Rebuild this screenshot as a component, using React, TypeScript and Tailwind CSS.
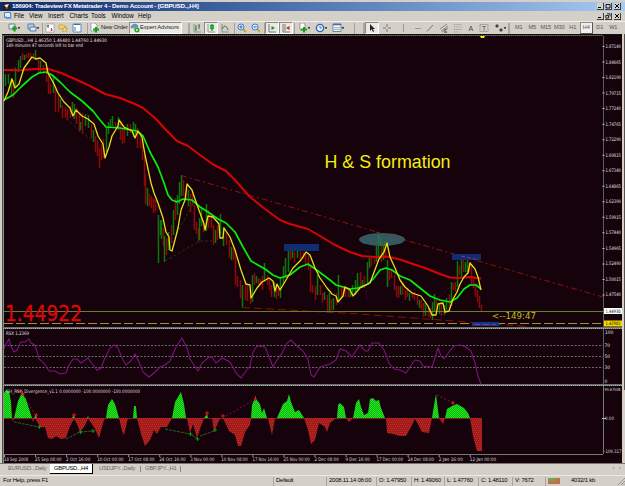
import type { ReactNode } from "react";

const menus = [
  { label: "File", cls: "w-[15px]" },
  { label: "View", cls: "w-[19px]" },
  { label: "Insert", cls: "w-[21.5px]" },
  { label: "Charts", cls: "w-[21.5px]" },
  { label: "Tools", cls: "w-[20.5px]" },
  { label: "Window", cls: "w-[26.5px]" },
  { label: "Help", cls: "w-[20px]" },
];

const periods = ["M1", "M5", "M15", "M30", "H1", "H4", "D1", "W1"];

const prices = [
  "1.87140", "1.84665", "1.82190", "1.79715", "1.77240", "1.74765", "1.72290", "1.69815", "1.67340",
  "1.64865", "1.62390", "1.59915", "1.57440", "1.54965", "1.52490", "1.50015", "1.47540",
];

const dates = [
  "18 Sep 2008", "25 Sep 08:00", "2 Oct 16:00", "10 Oct 00:00", "17 Oct 08:00", "24 Oct 16:00", "3 Nov 00:00",
  "10 Nov 08:00", "17 Nov 16:00", "25 Nov 00:00", "2 Dec 08:00", "9 Dec 16:00", "17 Dec 00:00", "24 Dec 08:00",
  "2 Jan 16:00", "12 Jan 00:00",
];

// x high low direction
const candles =
  "5 74 86 g,8 74 84 g,11 78 96 g,13 80 98 r,15 68 86 g,18 60 72 g,20 56 68 g,22 53 60 r,24 55 60 g,26 54 58 r,28 53 58 r,30 53 58 r,33 53 60 r,35 50 60 g,38 60 73 r,40 61 73 g,43 65 74 r,46 70 82 r,48 74 94 r,50 84 94 r,53 75 93 g,55 86 112 r,58 95 112 r,60 99 108 g,62 105 118 r,65 107 118 r,67 109 120 r,70 106 118 r,72 102 116 g,74 104 119 g,76 108 124 r,79 113 132 r,80 122 130 g,82 113 134 r,85 114 126 g,88 115 128 g,91 124 138 r,93 130 142 g,95 136 152 r,97 140 156 r,99 148 168 r,101 144 160 r,103 139 158 r,106 127 152 g,108 122 134 g,110 119 128 g,112 116 126 g,115 122 128 r,118 117 130 g,120 123 140 r,122 128 144 r,124 128 143 r,127 124 136 g,130 124 133 r,133 122 137 g,135 124 136 g,137 128 148 r,140 132 148 r,142 140 160 r,144 156 186 r,145 175 204 r,147 188 206 g,149 194 206 r,151 196 208 r,153 198 213 r,155 200 212 r,158 215 263 g,160 220 235 g,161 220 239 g,163 228 246 r,164 236 262 g,166 238 255 r,168 232 250 g,171 225 243 r,173 210 235 g,175 198 220 r,177 195 215 g,179 182 204 g,181 175 196 g,183 180 196 r,186 186 200 r,188 190 206 g,190 194 212 r,192 192 206 r,194 205 230 r,196 222 234 r,198 228 242 r,199 218 240 g,201 208 226 g,203 220 232 r,206 204 231 g,208 210 228 r,211 213 228 r,213 225 245 r,215 230 243 g,217 225 240 r,220 214 234 g,223 227 246 g,226 232 245 r,229 240 258 r,231 247 260 g,233 248 260 r,235 250 285 r,237 276 287 r,240 280 298 r,242 285 307 g,245 282 300 r,247 286 301 r,250 290 304 r,252 275 302 g,254 273 285 r,256 276 283 g,258 278 284 r,260 279 285 r,262 276 290 r,264 263 282 g,267 275 285 r,269 280 290 r,271 285 297 r,274 282 297 g,276 284 299 r,278 286 296 r,280 278 298 g,283 266 284 g,285 258 278 g,288 247 272 g,290 250 260 r,292 250 258 g,294 252 262 r,297 248 258 g,300 250 260 r,303 252 259 r,305 252 264 r,308 255 270 r,310 265 292 r,312 285 293 r,315 286 300 r,317 275 295 g,320 285 295 r,322 293 303 r,324 292 300 g,327 295 312 r,329 293 311 g,331 299 310 r,333 298 310 g,336 293 305 r,338 275 300 g,341 285 298 r,343 288 297 r,345 286 297 r,348 290 297 r,350 288 297 g,352 285 296 g,355 280 295 g,357 273 290 g,360 272 286 r,362 280 288 g,364 276 288 r,367 262 285 g,369 257 268 g,371 258 266 r,374 256 264 r,376 240 262 g,378 234 258 g,381 246 262 r,383 243 260 g,385 244 258 r,387 260 287 g,389 270 280 r,391 270 278 r,394 275 290 r,396 286 297 r,398 286 298 r,400 286 295 g,402 283 295 r,405 290 300 r,407 288 297 r,409 293 301 g,412 292 298 r,414 292 300 r,417 294 305 r,419 300 308 g,421 300 310 r,423 303 317 r,425 303 316 g,428 308 317 r,430 308 318 r,432 302 320 g,434 294 312 g,436 300 313 r,439 304 314 g,441 304 316 r,444 305 315 g,446 298 310 g,449 294 308 r,451 282 306 g,453 283 290 r,455 282 292 r,457 261 287 g,459 266 275 r,461 256 277 g,463 258 272 r,465 262 272 g,467 258 274 g,469 262 272 r,471 266 285 r,473 276 288 r,475 283 297 r,477 290 302 r,479 296 308 r,481 305 312 r";

const redMa =
  "4,70 20,70.3 35,69 48,69 60,72.5 75,79 90,86 105,94 120,98 135,104 143,108 155,118 167,131 177,141 188,146 200,155 214,165 226,171 235,180 250,197 265,209 280,220 290,224 308,229 320,236 335,245 350,252 362,256 375,257 387,256.5 400,259.5 410,263 425,268 440,274 450,277.5 460,278 470,277 481,278.5";
const greenMa =
  "4,100 13,95 22,86 32,77 39,73 46,72 52,75 60,82 70,92 82,101 93,111 100,120 106,127 120,128 137,131 143,136 150,152 158,167 164,183 168,195 172,200 177,202 183,199 192,200 200,207 208,212 218,219 226,223 235,232 243,247 251,261 265,269 273,275 280,278 290,275 300,267 308,264 318,271 330,280 336,285 350,289 358,288 368,284 374,278 380,270 386,268 392,270 400,276 410,280 420,288 430,296 440,300 450,302 457,298 464,289 470,285 476,285 481,289";
const yellowMa =
  "4,101 8,92 12,79 15,88 19,84 24,68 32,57 36,59 40,58 46,63 48,73 54,84 58,93 64,102 70,108 73,116 76,110 82,116 88,119 94,124 98,136 103,144 105,158 109,147 112,136 118,126 119,120 124,127 132,131 135,138 138,131 142,137 145,155 151,183 154,193 158,203 163,218 166,232 169,237 170,250 172,251 175,240 178,228 181,210 185,200 187,184 192,190 195,199 200,213 204,224 205,230 208,216 213,217 219,224 220,238 223,238 224,228 230,237 235,250 241,270 246,284 250,285 251,298 257,288 262,282 269,278 273,281 275,291 277,284 280,290 286,280 293,268 301,260 306,252 310,255 315,268 320,278 327,288 332,294 336,296 338,302 343,296 345,287 350,290 353,296 360,288 370,283 376,267 379,259 384,252 387,243 390,257 395,268 400,280 405,287 412,293 421,296 428,306 432,315 436,315 438,304 443,303 445,312 449,311 453,299 457,292 460,284 464,277 468,273 470,263 475,269 478,277 481,290";
const rsi =
  "4,349 6,344 9,339 11,346 14,352 17,350 21,342 25,342 29,339 31,343 35,345 39,359 44,363 49,371 55,371 60,374 66,373 69,365 73,359 77,359 81,363 88,358 93,365 97,370 101,368 105,358 110,348 114,345 118,348 123,360 126,365 131,361 135,354 139,362 143,372 149,377 154,373 160,367 165,365 170,361 176,347 182,338 187,348 190,359 198,371 202,363 208,358 212,357 216,363 222,358 230,362 236,373 241,378 246,371 250,366 253,352 257,346 265,347 268,354 273,367 277,360 282,353 287,343 291,340 297,346 303,351 308,359 311,375 314,377 320,367 330,364 336,360 340,349 346,351 352,357 355,352 360,345 365,351 368,351 372,343 379,343 384,350 389,363 394,369 400,370 406,373 412,364 415,360 420,361 423,366 432,367 435,358 438,348 441,356 444,359 449,352 454,346 460,345 466,347 471,351 475,363 478,376 481,384";

const bulls = [
  "4,418 4,393 6,390 9,391 11,402 12,418",
  "14,418 18,401 22,393 26,399 32,418",
  "34,418 36,414 37,418",
  "72,418 73.5,415 75,418",
  "87,418 88,416 89,418",
  "106,418 108,405 112,399 115,404 119,418",
  "133,418 134,406 136,406 137,418",
  "172,418 175,402 181,392 184,404 186,418",
  "204,418 207,414 208,418",
  "251,418 252,405 255,398 260,404 262,413 264,408 267,418",
  "277,418 283,404 287,401 289,394 291,402 295,412 299,410 304,418",
  "337,418 338,405 340,403 344,407 346,418",
  "353,418 356,403 359,399 361,407 364,415 368,413 370,399 373,398 376,401 379,400 381,408 385,418",
  "432,418 434,405 436,394 439,418",
  "445,418 447,409 452,406 457,404 464,408 468,413 470,418",
];
const bears = [
  "12,418 13,422 14,418",
  "32,418 33,422 35,418",
  "35,418 40,427 45,427 48,438 52,439 56,436 61,439 66,438 70,426 74,419 77,424 80,432 84,427 88,419 92,424 95,429 99,438 104,420 106,418",
  "119,418 122,431 124,435 128,418",
  "137,418 141,434 145,446 150,440 154,430 157,434 161,427 167,427 172,418",
  "187,418 190,433 193,424 197,438 201,426 204,418",
  "212,418 214,432 220,418",
  "223,418 229,431 235,435 238,446 241,446 245,432 250,425 251,418",
  "268,418 272,435 275,418",
  "304,418 308,430 311,444 315,440 319,423 325,427 327,432 330,423 336,418",
  "346,418 349,422 353,418",
  "386,418 387,433 393,434 400,436 406,436 411,427 415,419 418,424 422,432 429,433 432,418",
  "439,418 443,424 445,418",
  "470,418 473,436 477,451 482,451 482,418",
];

const Sep = () => <span className="h-[11px] w-px shrink-0 border-l border-[#a5a29b] bg-white" />;
const Grip = () => <span className="h-[11px] w-[2px] shrink-0 border-x border-[#aaa7a0] bg-white" />;

const Tool = ({ w, pressed, children }: { w: string; pressed?: boolean; children?: ReactNode }) => (
  <span
    className={`flex h-[12px] shrink-0 items-center justify-center ${w} ${
      pressed ? "border border-t-[#8d8a84] border-l-[#8d8a84] border-r-white border-b-white bg-[#ebe9e4]" : ""
    }`}
  >
    <svg width="12" height="10" viewBox="0 0 12 10" className="shrink-0" fill="none">
      {children}
    </svg>
  </span>
);

const Caret = () => <path d="M10 4.5h2l-1 1.2z" fill="#111" stroke="#111" strokeWidth=".5" />;

const WinButtons = ({ restore }: { restore?: boolean }) => (
  <div className="flex gap-px pr-1">
    {["min", "max", "close"].map((k) => (
      <span
        key={k}
        className="flex h-[7px] w-[7px] items-center justify-center border-r border-b border-[#404040] bg-[#d4d0c8] last:ml-px"
      >
        <svg width="6" height="6" viewBox="0 0 6 6" fill="none" stroke="#000" strokeWidth="1">
          {k === "min" && <path d="M1 4.5h3" />}
          {k === "max" && !restore && <path d="M1 1.5h4v3.5h-4z" strokeWidth=".9" />}
          {k === "max" && restore && <path d="M2 .8h3v2.7M.8 2.5h2.7v2.6H.8z" strokeWidth=".8" />}
          {k === "close" && <path d="M1 1l4 4M5 1L1 5" />}
        </svg>
      </span>
    ))}
  </div>
);

const Toolbar = () => (
  <div className="flex h-[13px] items-center overflow-hidden border-t border-[#f0eeea] pl-1 text-[5.8px] text-[#222]">
    <Tool w="w-[19px]">
      <path d="M1 1h6v5H1z" fill="#dfe8f0" stroke="#748696" />
      <path d="M4 5.5h5M6.5 3v5.5" stroke="#159b20" strokeWidth="2.2" />
      <Caret />
    </Tool>
    <Tool w="w-[19px]">
      <path d="M1 1h6v5H1z" fill="#bcd5ef" stroke="#557daa" />
      <path d="M3 4h6v4H3z" fill="#d8e8fa" stroke="#557daa" />
      <Caret />
    </Tool>
    <Sep />
    <Tool w="w-[13px]">
      <path d="M2 1h8v8H2z" fill="#fff" stroke="#9a9a9a" strokeWidth=".7" />
      <path d="M4 2v3M3 3.2l1-1.2 1 1.2" stroke="#16852a" />
      <path d="M7.5 8V5M6.5 6.7l1 1.2 1-1.2" stroke="#d34" />
    </Tool>
    <Tool w="w-[14px]">
      <path d="M2 2h4l1 1h2v3H2z" fill="#f5d36b" stroke="#b8912c" strokeWidth=".6" />
      <path d="M7.5 3.5l1 2h2l-1.5 1.3.5 2-2-1.2-1.8 1.2.5-2L5 5.5h1.8z" fill="#ffe873" stroke="#a28220" strokeWidth=".5" />
    </Tool>
    <Tool w="w-[14px]">
      <path d="M2 1h8v8H2z" fill="#fff" stroke="#5a86bd" />
      <path d="M3 1.5h6" stroke="#3a6eb4" />
      <path d="M4 4v4" stroke="#9bbbe2" strokeWidth="2" />
    </Tool>
    <span className="w-[3px]" />
    <Sep />
    <Tool w="w-[12px]">
      <path d="M3 0h4l2 2v6H3z" fill="#fff" stroke="#888" strokeWidth=".7" />
      <path d="M5 6.5h6M8 4v5.5" stroke="#19a122" strokeWidth="2.2" />
    </Tool>
    <span className="w-[29px] whitespace-nowrap pl-px tracking-[-0.15px]">New Order</span>
    <span className="flex h-[12px] w-[53px] items-center whitespace-nowrap border border-t-[#8d8a84] border-l-[#8d8a84] border-r-white border-b-white bg-[#ebe9e4] tracking-[-0.1px]">
      <svg width="10" height="10" viewBox="0 0 10 10">
        <path d="M1 5c0-5 7-5 7-1z" fill="#5f9bd8" stroke="#386da5" strokeWidth=".5" />
        <path d="M2 5h3v3z" fill="#efc84a" />
        <circle cx="7" cy="7" r="2.5" fill="#1ba52a" />
        <path d="M6.2 5.7l2 1.3-2 1.3z" fill="#fff" />
      </svg>
      Expert Advisors
    </span>
    <span className="w-[6px]" />
    <Grip />
    <Tool w="w-[14px]">
      <path d="M3 1v8h7" stroke="#777" strokeWidth=".7" />
      <path d="M5 2v6M4 6h1M8 1v5M8 3h1" stroke="#257a30" />
    </Tool>
    <Tool w="w-[14px]" pressed>
      <path d="M3 1v8h7" stroke="#777" strokeWidth=".7" />
      <path d="M7 1v7" stroke="#138a1b" />
      <path d="M5.5 2h3v4h-3z" fill="#21b52c" stroke="#138a1b" strokeWidth=".6" />
    </Tool>
    <Tool w="w-[14px]">
      <path d="M3 1v8h7" stroke="#777" strokeWidth=".7" />
      <path d="M3 6c2-4 4-4 6 1" stroke="#257a30" />
    </Tool>
    <span className="w-[2px]" />
    <Sep />
    {["in", "out"].map((z) => (
      <Tool key={z} w="w-[14px]">
        <path d="M7 6l3 3" stroke="#c9a227" strokeWidth="1.8" />
        <circle cx="5" cy="4" r="3" fill="#dcedff" stroke="#3f7fce" />
        <path d={z === "in" ? "M3.5 4h3M5 2.5v3" : "M3.5 4h3"} stroke="#2262b4" />
      </Tool>
    ))}
    <span className="w-px" />
    <Sep />
    <Tool w="w-[14px]" pressed>
      <path d="M3 1v8h7" stroke="#777" />
      <path d="M5.5 3l3.5 2-3.5 2z" fill="#17912b" />
    </Tool>
    <Tool w="w-[14px]" pressed>
      <path d="M3 1v8h7M5 1v7" stroke="#777" />
      <path d="M9.5 3L6 5l3.5 2z" fill="#c52727" />
    </Tool>
    <span className="w-px" />
    <Sep />
    <Tool w="w-[17px]">
      <path d="M2 0h4l1 2v5H2z" fill="#fff" stroke="#777" strokeWidth=".7" />
      <path d="M3 6.5h6M6 4v5.5" stroke="#19a122" strokeWidth="2" />
      <Caret />
    </Tool>
    <Tool w="w-[17px]">
      <circle cx="5" cy="5" r="3.6" fill="#e7f2ff" stroke="#2869bd" strokeWidth="1.4" />
      <path d="M5 2.8V5h1.8" stroke="#333" strokeWidth=".7" />
      <Caret />
    </Tool>
    <Tool w="w-[17px]">
      <path d="M1 1h8v7.5H1z" fill="#fff" stroke="#5b86b8" />
      <path d="M1 1.5h8" stroke="#3a6eb4" strokeWidth="1.5" />
      <path d="M2 5l2-1 2 1 2-1" stroke="#c55" strokeWidth=".7" />
      <path d="M2 7l2-1 2 1 2-1" stroke="#2a9b38" strokeWidth=".7" />
      <Caret />
    </Tool>
    <span className="w-[8px]" />
    <Sep />
    <span className="w-[8px]" />
    <Grip />
    <Tool w="w-[14px]" pressed>
      <path d="M4 1v7l1.7-1.7L7 9l1-.5-1-2.500h2z" fill="#222" />
    </Tool>
    <Tool w="w-[15px]">
      <path d="M6 1v3M6 6v3M2 5h3M7 5h3" stroke="#777" />
    </Tool>
    <Tool w="w-[16px]">
      <path d="M7.500 1v8" stroke="#999" />
    </Tool>
    <Tool w="w-[13px]">
      <path d="M4 5.500h6" stroke="#999" />
    </Tool>
    <Tool w="w-[14px]">
      <path d="M3 8.500L9 2" stroke="#777" />
    </Tool>
    <Tool w="w-[14px]">
      <path d="M2 6l7-5M3 8l7-5M4 9l6-4" stroke="#777" strokeWidth=".8" />
      <text x="6" y="10" fontSize="5" fill="#333">E</text>
    </Tool>
    <Tool w="w-[13px]">
      <path d="M2 1.500h8M2 4h8M2 6.500h8M2 9h5" stroke="#888" strokeWidth=".7" strokeDasharray="1 .6" />
    </Tool>
    <Tool w="w-[13px]">
      <text x="3.500" y="8" fontSize="7" fill="#444">A</text>
    </Tool>
    <Tool w="w-[14px]">
      <path d="M2 1.500h8v7H2z" stroke="#777" strokeWidth=".7" strokeDasharray="1 .6" />
      <text x="4" y="7.500" fontSize="6.500" fill="#444">T</text>
    </Tool>
    <Tool w="w-[17px]">
      <path d="M1 3l2-2 2 2-2 2zM5 7l2-2 2 2-2 2z" fill="#444" />
      <Caret />
    </Tool>
    <Grip />
    <div className="flex items-center pl-[2px] text-[5.6px] tracking-[-0.1px] text-[#555]">
      {periods.map((p) => (
        <span
          key={p}
          className={`flex h-[12px] w-[13.5px] items-center justify-center ${p === "H4" ? "border border-t-[#8d8a84] border-l-[#8d8a84] bg-[#f2f0ec]" : ""}`}
        >
          {p}
        </span>
      ))}
    </div>
  </div>
);

const PriceChart = () => (
  <svg width="622" height="293" viewBox="0 34 622 293" className="block shrink-0" fill="none">
    <path d="M2 34.5h620" stroke="#111" />
    <path d="M3 35.5h600" stroke="#9a9f98" strokeDasharray="1 1" />
    <path d="M3 35.5h600" stroke="#4f574f" strokeOpacity=".7" />
    {candles.split(",").map((c) => {
      const [x, hi, lo, dir] = c.split(" ");
      return <path key={c} d={`M${Number(x) + 0.5} ${hi}V${lo}`} stroke={dir === "g" ? "#087808" : "#8c0a0a"} strokeWidth="1.5" />;
    })}
    <path d="M157.5 205v42M193.5 212v14M388.5 270v16M366.5 290v10" stroke="#4b0a4b" strokeDasharray="1 1" />
    <path d="M66 119l27 22M165 261l35-20h12M172 243l20-38" stroke="#23301f" strokeDasharray="3 2" />
    <path d="M9 75l14-20M65 98l22 20M435 300l20-17" stroke="#6d1030" strokeDasharray="2 2" strokeWidth=".8" />
    <path d="M181 175.5L603 297" stroke="#8c1212" strokeDasharray="6 3 2 3" />
    <path d="M242 307.5L360 314L527 326.5" stroke="#861010" strokeDasharray="8 4" />
    <path d="M4 311.5h599" stroke="#66802a" />
    <path d="M4 323.5h599" stroke="#a3932e" strokeDasharray="9 3" />
    <rect x="284" y="244" width="35" height="7" fill="#102c72" />
    <rect x="452" y="254" width="29" height="6" fill="#102c72" />
    <rect x="472" y="322" width="27" height="4" fill="#12378a" />
    <path d="M474 324.5h22" stroke="#a0306a" strokeDasharray="6 3" />
    <ellipse cx="382" cy="239.5" rx="23" ry="6.5" fill="#35585e" />
    <path d="M378.5 235v10M380.5 238v8M384.5 242v4" stroke="#168a30" />
    <path d="M376 232l25 7" stroke="#8c3040" strokeDasharray="3 3" strokeWidth=".8" />
    <path d="M461 256l18 4" stroke="#a03070" strokeDasharray="4 2" />
    <g strokeLinejoin="round">
      <polyline points={redMa} stroke="#d60404" strokeWidth="2" />
      <polyline points={greenMa} stroke="#00f008" strokeWidth="1.7" />
      <polyline points={yellowMa} stroke="#e6e018" strokeWidth="1.3" />
    </g>
    <path d="M480 36h5l-1 2h-3z" fill="#f2ee10" />
    <g fontFamily="'DejaVu Sans Condensed','DejaVu Sans'" fontSize="4.8" fill="#e0e0e0">
      <text x="6" y="41.5" textLength="101" lengthAdjust="spacingAndGlyphs">GBPUSD..,H4 1.46350 1.46480 1.44760 1.44930</text>
      <text x="6" y="46.7" textLength="77" lengthAdjust="spacingAndGlyphs">149 minutes 47 seconds left to bar end</text>
      {prices.map((p, i) => (
        <text key={p} x="605.5" y={48 + i * 15.53} textLength="15.5" lengthAdjust="spacingAndGlyphs">{p}</text>
      ))}
    </g>
    <text x="324.5" y="168" fontFamily="Liberation Sans" fontSize="17.8" fill="#f3ef12" textLength="126" lengthAdjust="spacingAndGlyphs">H &amp; S formation</text>
    <text x="5" y="320.5" fontFamily="DejaVu Sans" fontSize="20.5" fill="#dc0808" stroke="#dc0808" strokeWidth=".3" textLength="77" lengthAdjust="spacingAndGlyphs">1.44922</text>
    <text x="492" y="318.8" fontFamily="DejaVu Sans" fontSize="8.4" fill="#c5be1a" textLength="44" lengthAdjust="spacingAndGlyphs">&lt;--149:47</text>
    <path d="M603.5 36v291" stroke="#596059" />
    <path d="M603.5 46v264" stroke="#c5c9c5" strokeWidth="2" strokeDasharray="1 14.53" />
    <rect x="604" y="308" width="18" height="6" fill="#fff" />
    <rect x="604" y="320.5" width="18" height="6" fill="#f5d800" />
    <g fontFamily="DejaVu Sans Condensed" fontSize="4.6" fill="#000">
      <text x="605.5" y="312.8" textLength="15" lengthAdjust="spacingAndGlyphs">1.44930</text>
      <text x="605.5" y="325.2" textLength="15" lengthAdjust="spacingAndGlyphs">1.42901</text>
    </g>
  </svg>
);

const PanelEdge = ({ y }: { y: number }) => (
  <>
    <path d={`M3 ${y + 0.5}h619M3 ${y + 1.5}h619`} stroke="#6b716c" />
    <path d={`M3 ${y + 1.5}h619`} stroke="#a9b0ae" strokeDasharray="1 1" />
  </>
);

const RsiPanel = () => (
  <svg width="622" height="57" viewBox="0 327 622 57" className="block shrink-0" fill="none">
    <PanelEdge y={327} />
    <path d="M4 345.5h599M4 356.5h599M4 367.5h599" stroke="#627062" strokeDasharray="2 1.5" />
    <polyline points={rsi} stroke="#7c147f" strokeWidth="1.1" />
    <path d="M603.5 329v55" stroke="#596059" />
    <g fontFamily="DejaVu Sans Condensed" fontSize="4.8" fill="#e0e0e0">
      <text x="6" y="334.5" textLength="23" lengthAdjust="spacingAndGlyphs">RSX 1.2369</text>
      <text x="605" y="333.5">100</text>
      <text x="604.5" y="347.3">70</text>
      <text x="604.5" y="358.3">50</text>
      <text x="604.5" y="369.3">30</text>
      <text x="604.5" y="383">0</text>
    </g>
  </svg>
);

const DivergencePanel = () => (
  <svg width="622" height="79" viewBox="0 384 622 79" className="block shrink-0" fill="none">
    <defs>
      <pattern id="bull" width="2" height="2" patternUnits="userSpaceOnUse">
        <path d="M0 0h2v2H0z" fill="#10b510" />
        <path d="M0 0h1v1H0zM1 1h1v1H1z" fill="#20e820" />
      </pattern>
      <pattern id="bear" width="2" height="4" patternUnits="userSpaceOnUse">
        <path d="M0 0h2v4H0z" fill="#a01a1a" />
        <path d="M0 0h1v1H0zM1 2h1v1H1z" fill="#c42b2b" />
      </pattern>
    </defs>
    <PanelEdge y={384} />
    <path d="M4 418.5h478" stroke="#7d2020" />
    {bulls.map((p) => (
      <polygon key={p} points={p} fill="url(#bull)" />
    ))}
    {bears.map((p) => (
      <polygon key={p} points={p} fill="url(#bear)" />
    ))}
    <path d="M22 393l14 23M437 395l16 8M226 416l30-17" stroke="#8d123c" strokeDasharray="2 2" />
    <path d="M14 422l25 5M66 439l14-7 13-1M165 429l25 5 8 5M200 436l14-5" stroke="#1c681d" strokeDasharray="3 1" />
    <path d="M37.5 427h4M39.5 425v4M78.5 432h4M80.5 430v4M91 431h4M93 429v4M188.5 434h4M190.5 432v4M195.5 439h4M197.5 437v4M213 430h4M215 428v4" stroke="#139016" />
    <path d="M20.5 394h4M22.5 391v5M34.5 415h3M36.5 413v5M72 415h4M74 413v4M205 413h4M207 411v5M221 416h4M223 414v4M254 399h3M255.5 396v5M451 403h4M453 401v4M16 391h5" stroke="#e51616" />
    <path d="M603.5 386v68M4 454.5h599" stroke="#727a72" />
    <path d="M602 418.5h4" stroke="#bbb" />
    <g fontFamily="DejaVu Sans Condensed" fontSize="4.8" fill="#dcdcdc">
      <text x="6" y="392.5" textLength="134" lengthAdjust="spacingAndGlyphs">GH_RSX_Divergence_v1.1 0.0000000 -100.0000000 -100.0000000</text>
      <text x="604.5" y="391" fontSize="4.2" textLength="16" lengthAdjust="spacingAndGlyphs">95.67508</text>
      <text x="605" y="420.3" textLength="9" lengthAdjust="spacingAndGlyphs">0.00</text>
      <text x="604" y="453.3" textLength="17.5" lengthAdjust="spacingAndGlyphs">-109.317</text>
      {dates.map((d, i) => (
        <text key={d} x={4 + i * 31.05} y="460.8" textLength={d.length * 2.2} lengthAdjust="spacingAndGlyphs">{d}</text>
      ))}
    </g>
    {dates.map((d, i) => (
      <path key={d} d={`M${4.5 + i * 31.05} 455v2`} stroke="#9a9a9a" />
    ))}
  </svg>
);

const StatusCell = ({ w, children }: { w: string; children?: ReactNode }) => (
  <span className={`flex h-[9px] shrink-0 items-center whitespace-nowrap border-l border-[#aaa69e] pl-[2px] ${w}`}>{children}</span>
);

export default function App() {
  return (
    <div className="flex h-[486px] w-[625px] flex-col overflow-hidden bg-[#d4d0c8] pt-[2px] font-['Liberation_Sans'] leading-none text-black">
      <div className="flex h-[9px] shrink-0 items-center bg-linear-to-r from-[#0c2a6c] via-[#5277b4] to-[#a6caf0] pl-[3px]">
        <svg width="7" height="7" viewBox="0 0 7 7">
          <path d="M0 0h7v7H0z" fill="#222" />
          <path d="M1 2l5-1-2 4z" fill="#eee" />
          <path d="M2 5h3" stroke="#c33" />
        </svg>
        <span className="grow whitespace-nowrap pl-[2px] text-[6.2px] font-bold tracking-[-0.22px] text-white">
          186904: Tradeview FX Metatrader 4 - Demo Account - [GBPUSD.,,H4]
        </span>
        <WinButtons />
      </div>
      <div className="flex h-[10px] shrink-0 items-center text-[6.3px]">
        <svg width="14" height="8" viewBox="0 0 14 8" fill="none">
          <path d="M4.5.5h6v5h-6z" fill="#e4efff" stroke="#4d80c4" />
          <path d="M6 4v2.5h5V3" stroke="#7aa2d6" />
        </svg>
        {menus.map((m) => (
          <span key={m.label} className={m.cls}>
            {m.label}
          </span>
        ))}
        <span className="grow" />
        <WinButtons restore />
      </div>
      <Toolbar />

      <div className="flex h-[429px] shrink-0">
        <div className="flex w-[622px] flex-col bg-[#16020a] [box-shadow:inset_2px_0_#d4d0c8,inset_3px_0_#4c504a,inset_4px_0_#8b9088]">
          <PriceChart />
          <RsiPanel />
          <DivergencePanel />
        </div>
        <div className="h-[356px] w-[3px] border-r border-[#55524e]" />
      </div>

      <div className="flex h-[12px] shrink-0 items-start border-t border-[#77746f] text-[5.8px] tracking-[-0.27px] text-[#6b6862]">
        <div className="flex h-[10px] items-center whitespace-nowrap">
          <span className="w-[50px] pl-[8px]">EURUSD..,Daily</span>
          <span className="flex h-[10px] w-[43px] items-center justify-center border-r border-b border-black bg-white text-black">GBPUSD..,H4</span>
          <span className="w-[47px] pl-[6px]">USDJPY..,Daily</span>
          <span className="w-[40px] border-l border-[#8d8a84] pl-[4px]">GBPJPY..,H1</span>
          <span className="h-[6px] border-l border-[#8d8a84]" />
        </div>
        <span className="grow" />
        <span className="flex gap-[6px] pt-[2px] pr-1 text-[4px] text-[#96938c]">
          <span>◂</span>
          <span>▸</span>
        </span>
      </div>

      <div className="flex h-[11px] shrink-0 items-center border-t border-[#eceae5] text-[5.9px] tracking-[-0.2px]">
        <span className="w-[273px] pl-[3px]">For Help, press F1</span>
        <StatusCell w="w-[53px]">Default</StatusCell>
        <StatusCell w="w-[50px]">2008.11.14 08:00</StatusCell>
        <StatusCell w="w-[35px]">O: 1.47950</StatusCell>
        <StatusCell w="w-[33px]">H: 1.49060</StatusCell>
        <StatusCell w="w-[34px]">L: 1.47760</StatusCell>
        <StatusCell w="w-[34px]">C: 1.48110</StatusCell>
        <StatusCell w="w-[33px]">V: 7672</StatusCell>
        <StatusCell w="w-[26px]">
          <svg width="12" height="6" viewBox="0 0 12 6">
            <path d="M0 0h12v6H0z" fill="#c8b878" />
            <path d="M1 0v3M3 0v3M5 0v3M7 0v3" stroke="#2b8b28" />
            <path d="M1 3v3M3 3v3M5 3v3M7 3v3M9 0v6M11 0v6" stroke="#b02a20" />
          </svg>
        </StatusCell>
        <span className="grow">4032/1 kb</span>
        <svg width="8" height="8" viewBox="0 0 8 8" stroke="#9a968e">
          <path d="M1 8l7-7M4 8l4-4M6.5 8L8 6.5" />
        </svg>
      </div>
    </div>
  );
}
